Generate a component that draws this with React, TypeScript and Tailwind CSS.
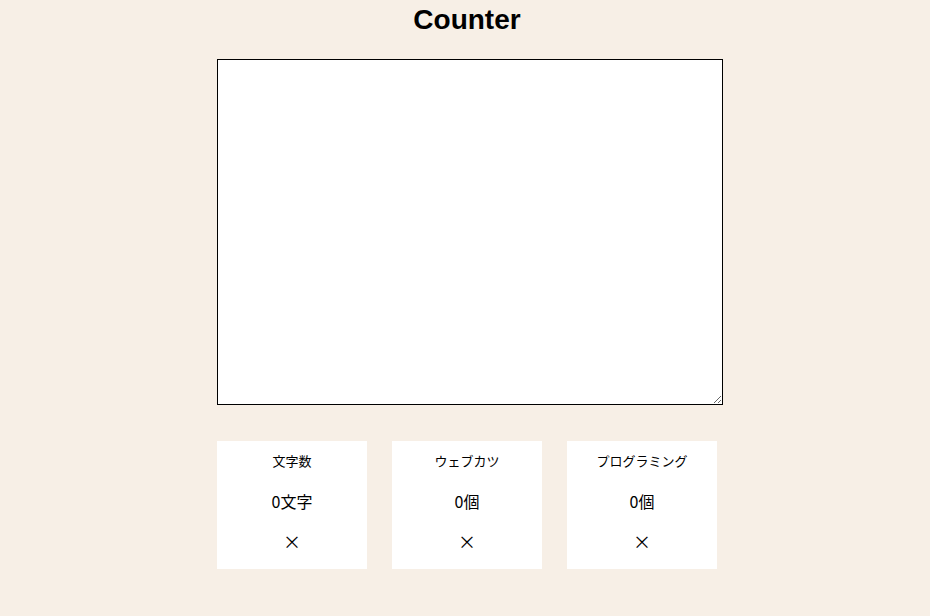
export default function App() {
  const cards = [
    { label: '文字数', value: '0文字' },
    { label: 'ウェブカツ', value: '0個' },
    { label: 'プログラミング', value: '0個' },
  ];

  return (
    <div
      className="min-h-[616px] w-full bg-[#f7efe6] flex justify-center pl-[10px]"
      style={{ fontFamily: '"Liberation Sans", "Noto Sans CJK JP", sans-serif' }}
    >
      <div className="w-[506px] flex flex-col">
        {/* Title */}
        <h1 className="h-[40px] leading-[40px] text-center text-[28px] font-bold text-black pr-[6px]">
          Counter
        </h1>

        {/* Text input */}
        <textarea className="mt-[19px] block w-[506px] h-[346px] box-border border border-black bg-white p-[2px] outline-none text-sm" />

        {/* Counters */}
        <div className="mt-[36px] flex gap-[25px]">
          {cards.map((card) => (
            <div
              key={card.label}
              className="w-[150px] h-[128px] bg-white flex flex-col items-center text-black"
              style={{ fontFamily: '"Noto Sans CJK JP", "Liberation Sans", sans-serif' }}
            >
              <div className="h-[40px] flex items-center text-[13px]">{card.label}</div>
              <div className="h-[40px] flex items-center text-[16px]">{card.value}</div>
              <div className="h-[40px] flex items-center text-[18px] text-black">×</div>
            </div>
          ))}
        </div>
      </div>
    </div>
  );
}
